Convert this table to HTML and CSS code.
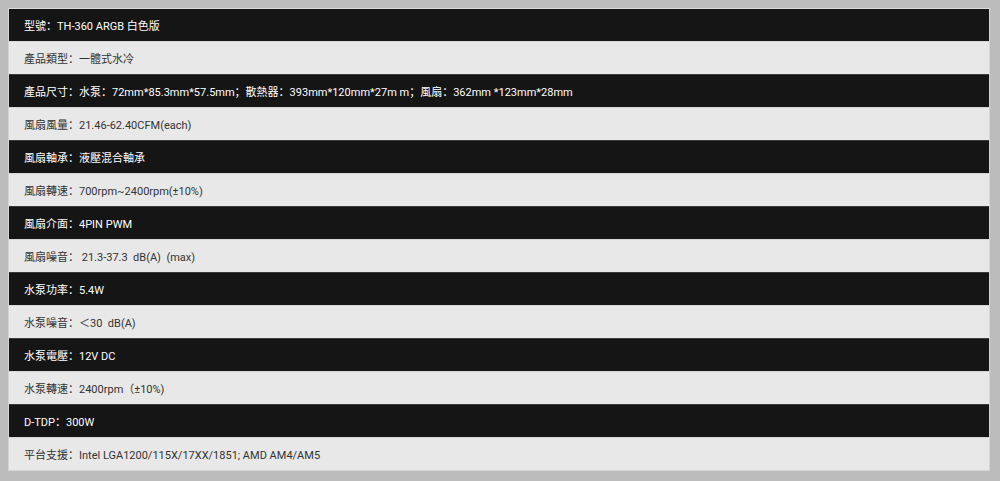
FILE: index.html
```html
<!DOCTYPE html>
<html lang="zh">
<head>
<meta charset="utf-8">
<link rel="stylesheet" href="styles.css">
</head>
<body>
<div class="spec">
  <div class="row dark">型號：TH-360 ARGB 白色版</div>
  <div class="row light">產品類型：一體式水冷</div>
  <div class="row dark">產品尺寸：水泵：72mm*85.3mm*57.5mm；散熱器：393mm*120mm*27m m；風扇：362mm *123mm*28mm</div>
  <div class="row light">風扇風量：21.46-62.40CFM(each)</div>
  <div class="row dark">風扇軸承：液壓混合軸承</div>
  <div class="row light">風扇轉速：700rpm~2400rpm(±10%)</div>
  <div class="row dark">風扇介面：4PIN PWM</div>
  <div class="row light">風扇噪音：&nbsp;21.3-37.3&nbsp; dB(A)&nbsp; (max)</div>
  <div class="row dark">水泵功率：5.4W</div>
  <div class="row light">水泵噪音：＜30&nbsp; dB(A)</div>
  <div class="row dark">水泵電壓：12V DC</div>
  <div class="row light">水泵轉速：2400rpm（±10%)</div>
  <div class="row dark">D-TDP：300W</div>
  <div class="row light">平台支援：Intel LGA1200/115X/17XX/1851; AMD AM4/AM5</div>
</div>
</body>
</html>
```

FILE: styles.css
```css
html, body {
  margin: 0;
  padding: 0;
  background: #bcbcbc;
}
body {
  padding: 8px 10px 10px 8px;
  font-family: Roboto, "Noto Sans CJK SC", sans-serif;
  font-size: 11px;
}
.spec {
  display: flex;
  flex-direction: column;
  border: 1px solid #d4d4d4;
  border-top-color: #dcdcdc;
}
.row {
  height: 32px;
  display: flex;
  align-items: center;
  padding-left: 15px;
  border-top: 1px solid #cfcfcf;
  white-space: pre;
}
.row:first-child {
  border-top: none;
  height: 32px;
}
.dark {
  background: #151515;
  color: #ffffff;
  border-top-color: #3a3a3a;
}
.light {
  background: #e8e8e8;
  color: #333333;
  border-top-color: #d8d8d8;
}
```
